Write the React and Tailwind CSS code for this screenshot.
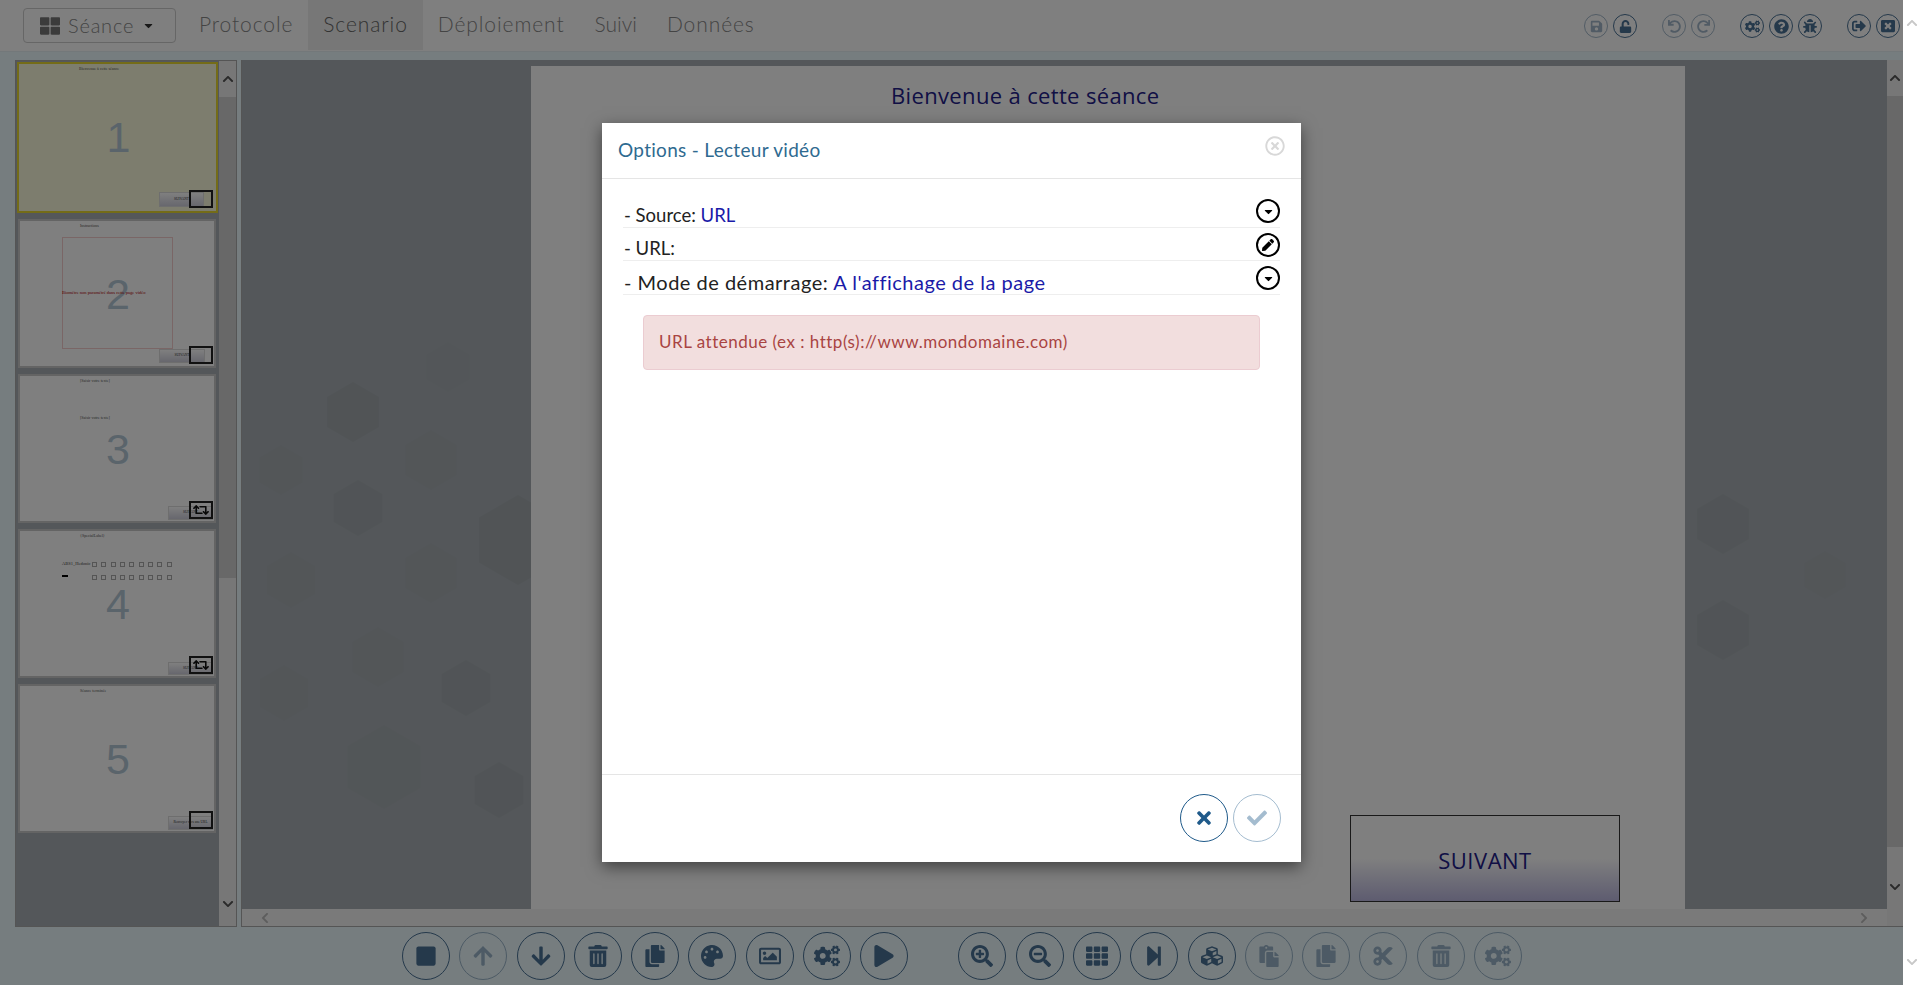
import React from "react";
import {
  FaSave, FaUnlock, FaUndo, FaRedo, FaCogs, FaQuestionCircle, FaBug, FaSignOutAlt, FaWindowClose,
  FaStop, FaArrowUp, FaArrowDown, FaTrashAlt, FaCopy, FaPalette, FaRegImage, FaPlay, FaSearchPlus, FaSearchMinus,
  FaTh, FaStepForward, FaCubes, FaPaste, FaCut, FaRetweet, FaRegTimesCircle, FaCaretDown, FaPen, FaThLarge,
  FaTimes, FaCheck, FaChevronUp, FaChevronDown, FaChevronLeft, FaChevronRight,
} from "react-icons/fa";

const gothic = "font-['Lato','Open_Sans',sans-serif]";
const tiny = "font-['Liberation_Serif',serif]";

function TopIcon({ Icon, dim, size = 13 }) {
  return (
    <span className={`flex h-6 w-6 items-center justify-center rounded-full border border-[#4a7296] text-[#4a7296] ${dim ? "opacity-50" : ""}`}>
      <Icon size={size} />
    </span>
  );
}

function ToolIcon({ Icon, dim, size = 22 }) {
  return (
    <span className={`flex h-12 w-12 shrink-0 items-center justify-center rounded-full border border-[#4a7296] text-[#4a7296] ${dim ? "opacity-50" : ""}`}>
      <Icon size={size} />
    </span>
  );
}

function Mini({ className, children }) {
  return (
    <div className={`absolute flex items-center justify-center border border-[#dddddd] bg-gradient-to-b from-white to-[#cfcfdc] text-[3.5px] whitespace-nowrap text-[#333] ${tiny} ${className}`}>
      {children}
    </div>
  );
}

function Thumb({ n, first, title, Mark, children }) {
  return (
    <div className={`relative shrink-0 border-2 ${first ? "h-[151px] w-[201px] border-[#e8d830] bg-[#fafadc]" : "h-[149px] w-[198px] border-[#c8c8c8] bg-white"}`}>
      <div className={`pt-[1px] pl-[60px] text-[4px] leading-[7px] text-[#555] ${tiny}`}>{title}</div>
      <div className="absolute inset-x-0 top-[48px] pl-[2px] text-center text-[43px] leading-[50px] text-[#b4c8d6] font-['Liberation_Sans',sans-serif]">{n}</div>
      {children}
      <div className={`absolute flex h-[18px] w-[24px] items-center justify-center border-[2px] border-[#222] text-[#111] ${first ? "right-[3px] bottom-[3px]" : "right-[1px] bottom-[2px]"}`}>
        {Mark ? <Mark size={16} /> : null}
      </div>
    </div>
  );
}

function Row({ label, value, Icon, short }) {
  return (
    <div className={`relative h-[33.5px] border-b border-[#eeeeee] leading-[24px] text-[#222] ${short ? "text-[18.5px]" : "text-[20px] tracking-[0.5px]"}`}>
      <div className="absolute left-[1px] bottom-[0px] whitespace-nowrap">
        - {label}: <span className="text-[#1a1aa8]">{value}</span>
      </div>
      <span className="absolute right-0 top-[5px] flex h-6 w-6 items-center justify-center rounded-full border-2 border-black text-black">
        <Icon size={Icon === FaPen ? 12 : 13} />
      </span>
    </div>
  );
}

const hexes = [
  [352, 412, 30, 0.035], [280, 470, 25, 0.012], [430, 460, 30, 0.012], [357, 508, 28, 0.03], [517, 540, 45, 0.035],
  [290, 580, 28, 0.012], [430, 573, 30, 0.012], [377, 657, 30, 0.012], [283, 693, 28, 0.012], [465, 688, 28, 0.03],
  [383, 767, 42, 0.015], [498, 790, 28, 0.03], [447, 367, 25, 0.008], [1722, 524, 30, 0.03], [1722, 630, 30, 0.03], [1824, 575, 24, 0.012],
];

function hexPoints(cx, cy, r) {
  const x = cx - 241;
  const y = cy - 60;
  return [0, 60, 120, 180, 240, 300]
    .map((a) => `${x + r * Math.cos(((a + 30) * Math.PI) / 180)},${y + r * Math.sin(((a + 30) * Math.PI) / 180)}`)
    .join(" ");
}

export default function App() {
  return (
    <div className={`relative h-[985px] w-full overflow-hidden bg-white ${gothic}`}>
      <div className="flex h-full w-[1903px] flex-col bg-[#ecfaff]">
        {/* top bar */}
        <div className="flex h-[52px] shrink-0 items-start border-b border-[#e7f0f4] bg-white pl-[23px] pr-[3px]">
          <div className="mt-2 flex h-[35px] w-[153px] items-center rounded border border-[#cccccc] pl-4 text-[20px] font-light text-[#888]">
            <FaThLarge size={20} className="text-[#777]" />
            <span className="mt-[-2px] ml-2 tracking-[0.8px]">Séance</span>
            <FaCaretDown size={13} className="ml-2 text-[#333]" />
          </div>
          <nav className="ml-[8px] flex text-[21px] leading-[48px] font-light tracking-[0.9px] text-[#888]">
            <span className="h-[50px] px-[15px]">Protocole</span>
            <span className="h-[50px] bg-[#eeeeee] px-[15px] text-[#666]">Scenario</span>
            <span className="h-[50px] px-[15px]">Déploiement</span>
            <span className="h-[50px] px-[15px] tracking-normal">Suivi</span>
            <span className="h-[50px] px-[15px]">Données</span>
          </nav>
          <div className="ml-auto mt-[14px] flex items-center">
            <div className="flex gap-[5px]"><TopIcon Icon={FaSave} dim /><TopIcon Icon={FaUnlock} /></div>
            <div className="ml-[25px] flex gap-[5px]"><TopIcon Icon={FaUndo} dim /><TopIcon Icon={FaRedo} dim /></div>
            <div className="ml-[25px] flex gap-[5px]"><TopIcon Icon={FaCogs} size={15} /><TopIcon Icon={FaQuestionCircle} size={15} /><TopIcon Icon={FaBug} size={14} /></div>
            <div className="ml-[25px] flex gap-[5px]"><TopIcon Icon={FaSignOutAlt} size={14} /><TopIcon Icon={FaWindowClose} size={14} /></div>
          </div>
        </div>
        {/* middle */}
        <div className="flex min-h-0 flex-1 pt-[8px] pl-[15px]">
          {/* thumbs */}
          <div className="flex w-[222px] shrink-0 border border-[#aaaaaa] bg-[#a8afb4]">
            <div className="flex w-[203px] flex-col gap-[6px] overflow-hidden pl-[2px] pt-[1px]">
              <div className="ml-[-1px]">
                <Thumb n={1} first title="Bienvenue à cette séance">
                  <Mini className="right-[12px] bottom-[4px] h-[15px] w-[45px]">SUIVANT</Mini>
                </Thumb>
              </div>
              <Thumb n={2} title="Instructions">
                <div className="absolute left-[42px] top-[16px] h-[112px] w-[111px] border border-[#f5cccc]" />
                <div className={`absolute left-[42px] top-[69px] text-[4.5px] leading-[5px] whitespace-nowrap text-[#b00000] ${tiny}`}>Biomètre non paramétré dans cette page vidéo</div>
                <Mini className="right-[9px] bottom-[3px] h-[14px] w-[46px]">SUIVANT</Mini>
              </Thumb>
              <Thumb n={3} title="[Saisir votre texte]" Mark={FaRetweet}>
                <div className={`absolute left-[60px] top-[38px] text-[4px] leading-[7px] text-[#555] ${tiny}`}>[Saisir votre texte]</div>
                <Mini className="right-[1px] bottom-[1px] h-[14px] w-[45px]">SUIVANT</Mini>
              </Thumb>
              <Thumb n={4} title="{SpecialLabel}" Mark={FaRetweet}>
                <div className={`absolute left-[42px] top-[30px] text-[4.5px] leading-[5px] whitespace-nowrap text-[#444] ${tiny}`}>ABS1_Hedonic</div>
                <div className="absolute left-[42px] top-[44px] h-[2px] w-[6px] bg-black" />
                <div className="absolute left-[72px] top-[31px] flex gap-[4.33px]">
                  {[...Array(9)].map((_, i) => <span key={i} className="h-[5px] w-[5px] border border-[#aaa]" />)}
                </div>
                <div className="absolute left-[72px] top-[44px] flex gap-[4.33px]">
                  {[...Array(9)].map((_, i) => <span key={i} className="h-[5px] w-[5px] border border-[#aaa]" />)}
                </div>
                <Mini className="right-[1px] bottom-[1px] h-[13px] w-[45px]">SUIVANT</Mini>
              </Thumb>
              <Thumb n={5} title="Séance terminée">
                <Mini className="right-[1px] bottom-[1px] h-[14px] w-[45px]">Renvoyer vers une URL</Mini>
              </Thumb>
            </div>
            <div className="flex w-[17px] flex-col bg-[#eeeeee] text-[#555]">
              <div className="flex h-[36px] shrink-0 items-center justify-center"><FaChevronUp size={12} /></div>
              <div className="h-[481px] shrink-0 bg-[#d0d0d0]" />
              <div className="min-h-0 flex-1" />
              <div className="flex h-[36px] shrink-0 items-center justify-center pb-[8px]"><FaChevronDown size={12} /></div>
            </div>
          </div>
          <div className="w-[4px] shrink-0" />
          {/* stage */}
          <div className="flex min-w-0 flex-1 flex-col border-b border-l border-[#aaaaaa]">
            <div className="flex min-h-0 flex-1">
              <div className="relative min-w-0 flex-1 overflow-hidden bg-[#a8afb4] pt-[6px] pl-[289px]">
                <svg className="absolute top-0 left-0" width="1646" height="849">
                  {hexes.map(([x, y, r, o], i) => (
                    <polygon key={i} points={hexPoints(x, y, r)} fill="black" fillOpacity={o} />
                  ))}
                </svg>
                <div className="relative h-[843px] w-[1154px] bg-white">
                  <div className="absolute left-[360px] top-[14px] text-[22px] leading-[30px] tracking-[0.35px] whitespace-nowrap text-[#23208a] font-['Open_Sans',sans-serif]">Bienvenue à cette séance</div>
                  <div className="absolute left-[819px] top-[749px] flex h-[87px] w-[270px] items-center justify-center border border-[#333] bg-gradient-to-b from-white from-50% to-[#bcb8e0] pt-[4px] text-[22px] tracking-[0.5px] text-[#23208a] font-['Open_Sans',sans-serif]">SUIVANT</div>
                </div>
              </div>
              <div className="flex w-[16px] shrink-0 flex-col bg-[#eeeeee] text-[#555]">
                <div className="flex h-[36px] shrink-0 items-center justify-center"><FaChevronUp size={12} /></div>
                <div className="h-[751px] shrink-0 bg-[#d0d0d0]" />
                <div className="flex min-h-0 flex-1 items-end justify-center pb-[16px]"><FaChevronDown size={12} /></div>
              </div>
            </div>
            <div className="flex h-[17px] shrink-0 bg-[#f4f4f4] text-[#bbbbbb]">
              <div className="flex min-w-0 flex-1 items-center justify-between pl-[17px] pr-[17px]">
                <FaChevronLeft size={12} /><FaChevronRight size={12} />
              </div>
              <div className="w-[16px] shrink-0 bg-[#eeeeee]" />
            </div>
          </div>
        </div>
        {/* toolbar */}
        <div className="flex h-[58px] shrink-0 items-start pl-[402px] pt-[5px]">
          <div className="flex gap-[9.3px]">
            <ToolIcon Icon={FaStop} /><ToolIcon Icon={FaArrowUp} dim /><ToolIcon Icon={FaArrowDown} /><ToolIcon Icon={FaTrashAlt} /><ToolIcon Icon={FaCopy} />
            <ToolIcon Icon={FaPalette} /><ToolIcon Icon={FaRegImage} /><ToolIcon Icon={FaCogs} size={26} /><ToolIcon Icon={FaPlay} />
          </div>
          <div className="ml-[50px] flex gap-[9.3px]">
            <ToolIcon Icon={FaSearchPlus} /><ToolIcon Icon={FaSearchMinus} /><ToolIcon Icon={FaTh} /><ToolIcon Icon={FaStepForward} /><ToolIcon Icon={FaCubes} />
            <ToolIcon Icon={FaPaste} dim /><ToolIcon Icon={FaCopy} dim /><ToolIcon Icon={FaCut} dim /><ToolIcon Icon={FaTrashAlt} dim /><ToolIcon Icon={FaCogs} size={26} dim />
          </div>
        </div>
      </div>

      {/* page scrollbar */}
      <div className="absolute top-0 right-0 bottom-0 flex w-[17px] flex-col items-center justify-between bg-white py-[17px] text-[#c8c8c8]">
        <FaChevronUp size={12} /><FaChevronDown size={12} />
      </div>

      {/* backdrop */}
      <div className="absolute top-0 bottom-0 left-0 w-[1903px] bg-black/50" />

      {/* modal */}
      <div className="absolute left-[602px] top-[123px] flex h-[739px] w-[699px] flex-col bg-white shadow-[0_5px_15px_rgba(0,0,0,0.5)]">
        <div className="relative h-[56px] shrink-0 border-b border-[#e5e5e5] pl-[16px] pt-[14px] text-[19px] leading-[26px] tracking-[0.3px] text-[#2f6a90]">
          Options - Lecteur vidéo
          <FaRegTimesCircle size={20} className="absolute top-[13px] right-[16px] text-[#d8d8d8]" />
        </div>
        <div className="min-h-0 flex-1 px-[21px] pt-[15px]">
          <div className="mb-[20px]">
            <Row label="Source" value="URL" Icon={FaCaretDown} short />
            <Row label="URL" value="" Icon={FaPen} short />
            <Row label="Mode de démarrage" value="A l'affichage de la page" Icon={FaCaretDown} />
          </div>
          <div className="mx-[20px] flex h-[55px] items-center rounded border border-[#ebccd1] bg-[#f2dede] px-[15px] text-[17px] tracking-[0.5px] text-[#a94442]">
            URL attendue (ex : http(s)://www.mondomaine.com)
          </div>
        </div>
        <div className="flex h-[88px] shrink-0 justify-end gap-[5px] border-t border-[#e5e5e5] pt-[19px] pr-[20px]">
          <span className="flex h-12 w-12 items-center justify-center rounded-full border border-[#1f5a8a] text-[#1f5a8a]"><FaTimes size={20} /></span>
          <span className="flex h-12 w-12 items-center justify-center rounded-full border border-[#1f5a8a] text-[#1f5a8a] opacity-40"><FaCheck size={20} /></span>
        </div>
      </div>
    </div>
  );
}
